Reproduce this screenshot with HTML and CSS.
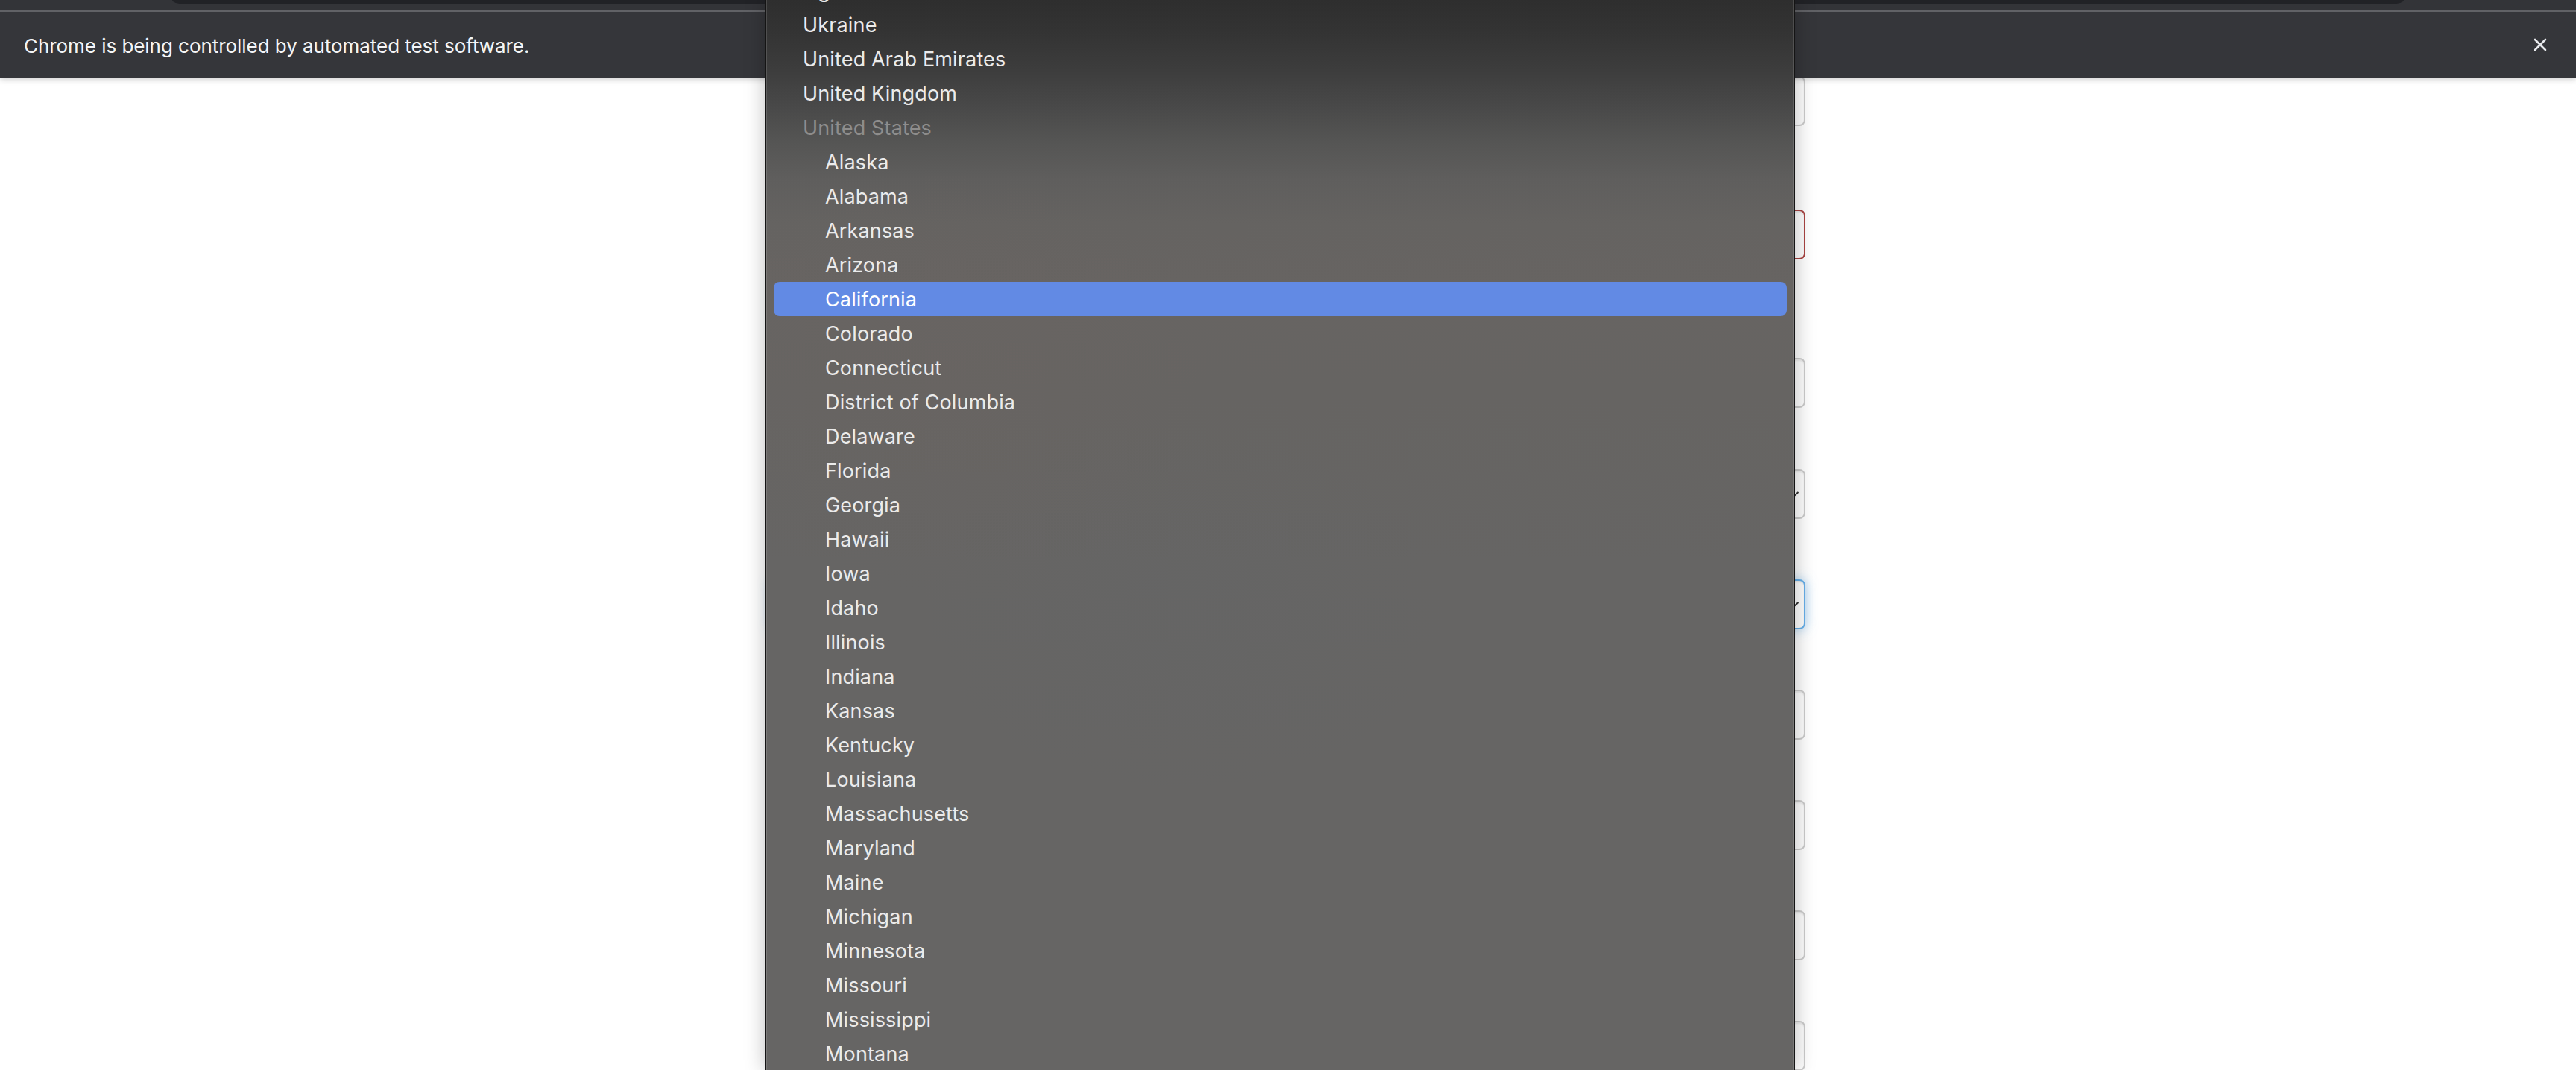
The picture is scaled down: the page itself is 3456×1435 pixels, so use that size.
FILE: index.html
```html
<!DOCTYPE html>
<html lang="en">
<head>
<meta charset="utf-8">
<title>Address form</title>
<link rel="stylesheet" href="styles.css">
</head>
<body>
<header class="chrome">
  <div class="toolbar">
    <div class="omnibox"></div>
  </div>
  <div class="toolbar-line"></div>
  <div class="infobar">
    <span class="infobar-text">Chrome is being controlled by automated test software.</span>
    <button class="infobar-close" aria-label="Close">
      <svg width="18" height="18" viewBox="0 0 18 18"><path d="M2 2 L16 16 M16 2 L2 16" stroke="#e8eaed" stroke-width="2.6" stroke-linecap="round" fill="none"/></svg>
    </button>
  </div>
</header>

<main class="page">
  <form class="form">
    <div class="field gap-a"><div class="control"></div></div>
    <div class="field gap-b"><div class="control error"></div></div>
    <div class="field gap-c"><div class="control"></div></div>
    <div class="field"><div class="control select"><svg class="chev" width="16" height="10" viewBox="0 0 16 10"><path d="M1.5 2 L8 8 L14.5 2" stroke="#333" stroke-width="2" fill="none"/></svg></div></div>
    <div class="field"><div class="control select focus"><svg class="chev" width="16" height="10" viewBox="0 0 16 10"><path d="M1.5 2 L8 8 L14.5 2" stroke="#333" stroke-width="2" fill="none"/></svg></div></div>
    <div class="field"><div class="control"></div></div>
    <div class="field"><div class="control"></div></div>
    <div class="field"><div class="control"></div></div>
    <div class="field"><div class="control"></div></div>
  </form>
</main>

<div class="popup">
  <ul class="menu">
    <li class="opt">Uganda</li>
    <li class="opt">Ukraine</li>
    <li class="opt">United Arab Emirates</li>
    <li class="opt">United Kingdom</li>
    <li class="opt group">United States</li>
    <li class="opt sub">Alaska</li>
    <li class="opt sub">Alabama</li>
    <li class="opt sub">Arkansas</li>
    <li class="opt sub">Arizona</li>
    <li class="opt sub selected">California</li>
    <li class="opt sub">Colorado</li>
    <li class="opt sub">Connecticut</li>
    <li class="opt sub">District of Columbia</li>
    <li class="opt sub">Delaware</li>
    <li class="opt sub">Florida</li>
    <li class="opt sub">Georgia</li>
    <li class="opt sub">Hawaii</li>
    <li class="opt sub">Iowa</li>
    <li class="opt sub">Idaho</li>
    <li class="opt sub">Illinois</li>
    <li class="opt sub">Indiana</li>
    <li class="opt sub">Kansas</li>
    <li class="opt sub">Kentucky</li>
    <li class="opt sub">Louisiana</li>
    <li class="opt sub">Massachusetts</li>
    <li class="opt sub">Maryland</li>
    <li class="opt sub">Maine</li>
    <li class="opt sub">Michigan</li>
    <li class="opt sub">Minnesota</li>
    <li class="opt sub">Missouri</li>
    <li class="opt sub">Mississippi</li>
    <li class="opt sub">Montana</li>
  </ul>
</div>
</body>
</html>
```

FILE: styles.css
```css
* { box-sizing: border-box; }
html, body {
  margin: 0;
  padding: 0;
}
body {
  width: 3456px;
  height: 1435px;
  overflow: hidden;
  background: #ffffff;
  position: relative;
  font-family: "Inter", "Noto Sans", "Liberation Sans", sans-serif;
}

/* browser chrome */
.chrome {
  position: relative;
  z-index: 2;
  box-shadow: 0 2px 8px rgba(0, 0, 0, 0.22);
}
.toolbar {
  height: 14px;
  background: #333438;
  padding-left: 231px;
  padding-right: 231px;
}
.omnibox {
  height: 6px;
  background: #212226;
  border-radius: 0 0 20px 20px / 0 0 6px 6px;
}
.toolbar-line {
  height: 2px;
  background: #616266;
}
.infobar {
  height: 88px;
  background: #35363a;
  display: flex;
  align-items: center;
  justify-content: space-between;
  padding: 0 39px 0 32px;
}
.infobar-text {
  color: #f4f5f6;
  font-size: 26px;
  letter-spacing: -0.05px;
  margin-top: 2px;
}
.infobar-close {
  background: none;
  border: 0;
  padding: 0;
  width: 18px;
  height: 18px;
  display: flex;
  margin-top: 0;
}

/* page form (mostly hidden under the popup) */
.page {
  position: relative;
  z-index: 1;
}
.form {
  width: 1388px;
  margin: -2px auto 0;
  display: flex;
  flex-direction: column;
}
.field {
  margin-bottom: 81px;
}
.field.gap-a { margin-bottom: 112px; }
.field.gap-b { margin-bottom: 132px; }
.field.gap-c { margin-bottom: 82px; }
.control {
  height: 67px;
  border: 2px solid #cccccc;
  border-radius: 8px;
  background: #fff;
  box-shadow: inset 0 2px 2px rgba(0, 0, 0, 0.075);
  display: flex;
  align-items: center;
  justify-content: flex-end;
  padding-right: 6px;
}
.control.error {
  border-color: #a94442;
}
.control.focus {
  border-color: #66afe9;
  box-shadow: inset 0 2px 2px rgba(0, 0, 0, 0.075), 0 0 16px rgba(102, 175, 233, 0.6);
}
.chev {
  display: block;
}

/* native select popup */
.popup {
  position: absolute;
  z-index: 5;
  left: 1027px;
  top: 0;
  width: 1381px;
  height: 1435px;
  overflow: hidden;
  border-left: 1px solid #141414;
  border-right: 1px solid #141414;
  box-shadow: 0 0 26px rgba(0, 0, 0, 0.28);
  background:
    radial-gradient(ellipse 500px 420px at 240px 520px, rgba(120, 100, 95, 0.10), rgba(120, 100, 95, 0) 70%),
    radial-gradient(ellipse 520px 360px at 560px 820px, rgba(90, 100, 110, 0.07), rgba(90, 100, 110, 0) 70%),
    linear-gradient(180deg, #2e2e2e 0px, #333333 40px, #3c3c3c 90px, #484848 140px, #555554 190px, #5f5e5d 240px, #656361 300px, #676462 380px, #666462 520px, #666564 760px, #666564 100%);
}
.popup::before {
  content: "";
  position: absolute;
  left: 0;
  top: 0;
  bottom: 0;
  width: 1px;
  background: rgba(255, 255, 255, 0.14);
}
.popup::after {
  content: "";
  position: absolute;
  right: 0;
  top: 0;
  bottom: 0;
  width: 1px;
  background: rgba(255, 255, 255, 0.14);
}
.menu {
  list-style: none;
  margin: -36px 0 0 0;
  padding: 0;
}
.opt {
  height: 46px;
  line-height: 44px;
  padding-top: 2px;
  margin: 0 10px;
  padding-left: 39px;
  color: #ebebeb;
  font-size: 27px;
  letter-spacing: 0.15px;
  white-space: nowrap;
  border-radius: 8px;
}
.opt.sub {
  padding-left: 69px;
}
.opt.group {
  color: #8e8d8c;
}
.opt.selected {
  background: #628ae4;
  color: #ffffff;
}
```
